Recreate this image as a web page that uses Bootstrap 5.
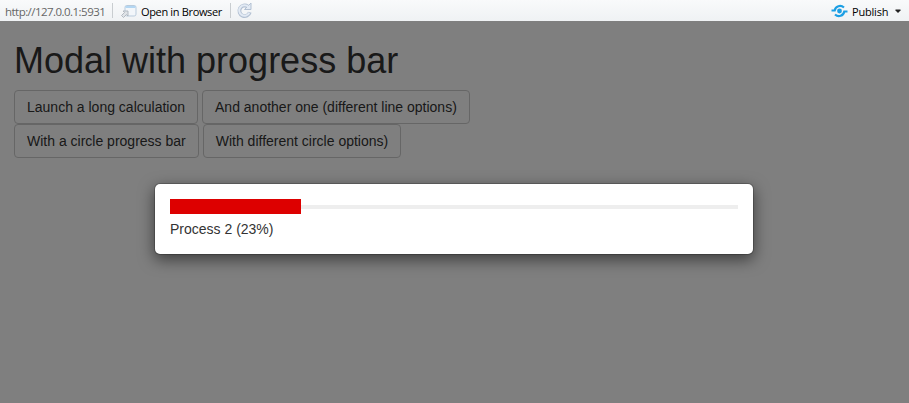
<!DOCTYPE html>
<html lang="en">
<head>
<meta charset="utf-8">
<meta name="viewport" content="width=device-width, initial-scale=1">
<title>Modal with progress bar</title>
<link href="https://cdn.jsdelivr.net/npm/bootstrap@5.3.0/dist/css/bootstrap.min.css" rel="stylesheet">
<style>
body { font-family: "Liberation Sans", Arial, sans-serif; font-size: 14px; line-height: 20px; color: #333; }
.viewer-bar { height: 21px; background: linear-gradient(#f9fafb, #eff2f4); font: 11px/21px "Open Sans", "Noto Sans", sans-serif; color: #000; padding: 1px 0 0 5px; white-space: nowrap; }
.viewer-url { width: 107px; color: #666; letter-spacing: -.54px; font-size: 11.5px; }
.viewer-sep { width: 1px; height: 15px; background: #c9cdd0; margin-top: -2px; }
.viewer-open { width: 89px; letter-spacing: -.34px; }
.viewer-publish { width: 43px; letter-spacing: -.2px; }
.page-title { font-size: 36px; line-height: 39px; margin: 20px 0 10px; font-weight: 400; }
.stage { padding: 0 14px; }
.btn-plain { --bs-btn-font-size: 14px; --bs-btn-line-height: 20px; --bs-btn-padding-x: 12px; --bs-btn-padding-y: 6px; --bs-btn-border-radius: 4px; --bs-btn-color: #333; --bs-btn-border-color: #ccc; --bs-btn-bg: #fff; }
.shade { background: rgba(0,0,0,.5); padding-top: 162px; }
.dialog-box { width: 600px; height: 72px; margin-left: 154px; padding: 15px; border: 1px solid rgba(0,0,0,.2); border-radius: 6px; box-shadow: 0 5px 15px rgba(0,0,0,.5); background-clip: padding-box; }
.line-track { height: 15px; background: linear-gradient(#eee, #eee) 0 5.5px / 100% 4px no-repeat; }
.line-fill { height: 15px; background: #d00; }
.line-label { margin-top: 5px; }
</style>
<script src="https://cdn.jsdelivr.net/npm/bootstrap@5.3.0/dist/js/bootstrap.bundle.min.js"></script>
</head>
<body class="vh-100 d-flex flex-column overflow-hidden">
<header class="viewer-bar d-flex align-items-center flex-shrink-0">
  <span class="viewer-url">http://127.0.0.1:5931</span>
  <span class="viewer-sep"></span>
  <svg class="ms-2" width="20" height="18" viewBox="0 0 20 18" aria-hidden="true">
    <rect x="4" y="3.500" width="11" height="10.500" rx="1.800" fill="#f2f6fa" stroke="#b9cbdc"/>
    <path d="M4.500 4h10v2h-10z" fill="#b3d6f2"/>
    <path d="M.5 13.500l3-3-1.500-1.500h5v5l-1.500-1.500-3 3z" fill="#dfe3e7" stroke="#abb3bb" stroke-width=".9"/>
  </svg>
  <span class="viewer-open">Open in Browser</span>
  <span class="viewer-sep"></span>
  <svg class="ms-1" width="20" height="20" viewBox="0 0 20 20" aria-hidden="true">
    <path d="M12.800 5.500A5.300 5.300 0 1 0 14.800 11.300" fill="none" stroke="#b3c1d3" stroke-width="3.800"/>
    <path d="M9.500 8.500h6.500V2z" fill="#e2eaf4" stroke="#b3c1d3" stroke-linejoin="round"/>
    <path d="M13.500 6A5.300 5.300 0 1 0 14.300 11.800" fill="none" stroke="#e2eaf4" stroke-width="2"/>
  </svg>
  <svg class="ms-auto" width="17" height="16" viewBox="0 0 17 16" aria-hidden="true">
    <circle cx="8.500" cy="8" r="2.400" fill="#1c9fe4"/>
    <path d="M.5 7.500h3.200C4.500 3 9.500 1.500 13 4.500M16.500 8.500h-3.200C12.500 13 7.500 14.500 4 11.500" fill="none" stroke="#1c9fe4" stroke-width="2.200"/>
  </svg>
  <span class="viewer-publish ms-1">Publish</span>
  <svg class="me-2" width="6" height="4" viewBox="0 0 6 4" aria-hidden="true"><path d="M.5 .5h5v1L3 4 .5 1.500z" fill="#222"/></svg>
</header>
<div class="position-relative flex-grow-1">
  <main class="stage overflow-hidden">
    <h1 class="page-title">Modal with progress bar</h1>
    <div class="d-flex gap-1">
      <button type="button" class="btn btn-plain">Launch a long calculation</button>
      <button type="button" class="btn btn-plain">And another one (different line options)</button>
    </div>
    <div class="d-flex gap-1">
      <button type="button" class="btn btn-plain">With a circle progress bar</button>
      <button type="button" class="btn btn-plain">With different circle options)</button>
    </div>
  </main>
  <div class="shade position-absolute top-0 start-0 w-100 h-100">
    <div class="dialog-box bg-white" role="dialog" aria-label="Progress">
      <div class="line-track"><div class="line-fill" style="width:23%"></div></div>
      <div class="line-label">Process 2 (23%)</div>
    </div>
  </div>
</div>
</body>
</html>
